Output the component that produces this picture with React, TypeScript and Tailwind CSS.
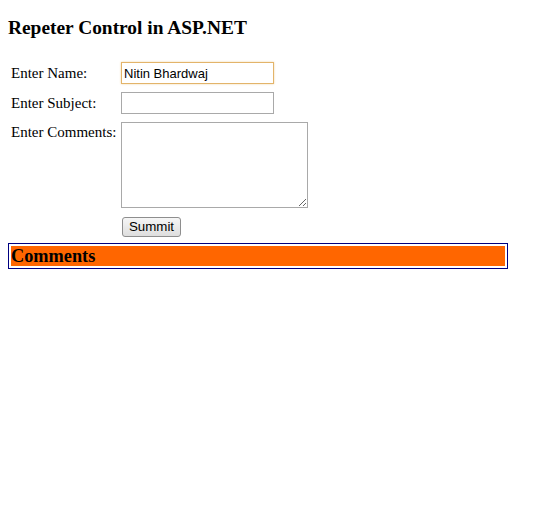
import React from "react";

const serif = "font-['Liberation_Serif','Times_New_Roman',serif]";
const sans = "font-['Liberation_Sans',Arial,sans-serif]";

export default function App() {
    return (
        <div className={`w-[550px] h-[530px] bg-white text-black ${serif}`}>
            <div className="pt-[17px] pl-2">
                <h3 className="text-[19.4px] font-bold leading-[22px]">Repeter Control in ASP.NET</h3>
            </div>

            <div className="mt-[23px] pl-[11px] flex flex-col">
                <div className="flex items-center h-[22px]">
                    <label className="w-[110px] shrink-0 whitespace-nowrap text-[15px] leading-[18px]">Enter Name:</label>
                    <input
                        defaultValue="Nitin Bhardwaj"
                        className={`w-[153px] h-[22px] border border-[#e3b46a] shadow-[0_0_2px_#f0d6a8] px-[2px] text-[13px] text-black outline-none ${sans}`}
                    />
                </div>
                <div className="flex items-center h-[22px] mt-[8px]">
                    <label className="w-[110px] shrink-0 whitespace-nowrap text-[15px] leading-[18px]">Enter Subject:</label>
                    <input className={`w-[153px] h-[22px] border border-[#a9a9a9] px-[2px] text-[13px] outline-none ${sans}`}/>
                </div>
                <div className="flex items-start mt-[8px]">
                    <label className="w-[110px] shrink-0 whitespace-nowrap text-[15px] leading-[18px] pt-[1px]">Enter Comments:</label>
                    <textarea className={`w-[187px] h-[86px] border border-[#a9a9a9] text-[13px] outline-none ${sans}`}/>
                </div>
                <div className="flex mt-[9px] pl-[111px]">
                    <button
                        className={`w-[59px] h-[20px] rounded-[3px] border border-[#8e8e8e] bg-gradient-to-b from-[#f6f6f6] to-[#dedede] text-[13.33px] leading-[18px] text-black ${sans}`}
                    >
                        Summit
                    </button>
                </div>
            </div>

            <div className="mt-[6px] ml-2 w-[500px] h-[26px] border border-[#000080] p-[2px]">
                <div className="h-[20px] bg-[#ff6600] text-[18.3px] font-bold leading-[20px]">Comments</div>
            </div>
        </div>
    );
}
